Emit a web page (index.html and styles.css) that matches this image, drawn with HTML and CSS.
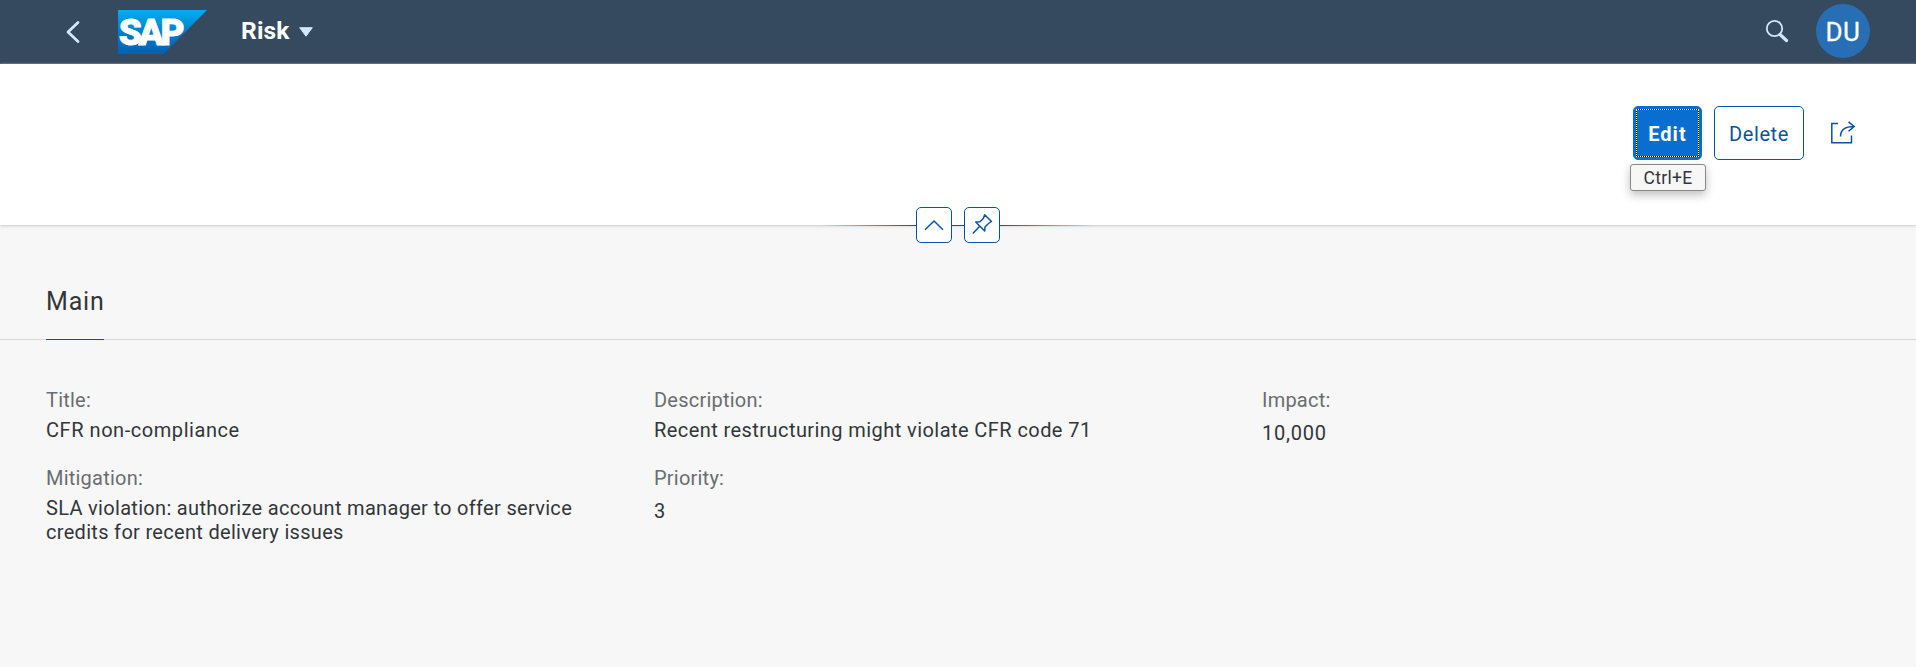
FILE: index.html
```html
<!DOCTYPE html>
<html lang="en">
<head>
<meta charset="utf-8">
<title>Risk</title>
<link rel="stylesheet" href="styles.css">
</head>
<body>
<header class="shell">
  <svg class="back" width="16" height="24" viewBox="0 0 16 24"><path d="M13 2.500 3 12l10 9.500" fill="none" stroke="#d1e8ff" stroke-width="2.800" stroke-linecap="round" stroke-linejoin="round"/></svg>
  <svg class="logo" width="89" height="44" viewBox="0 0 89 44">
    <defs><linearGradient id="logo-fill" x1="0" y1="0" x2="0" y2="1"><stop offset="0" stop-color="#00aeef"/><stop offset=".25" stop-color="#0097dc"/><stop offset=".6" stop-color="#0076c8"/><stop offset="1" stop-color="#0062b4"/></linearGradient></defs>
    <path d="M0 0H89L45.500 44H0Z" fill="url(#logo-fill)"/>
    <text x=".8" y="34.500" class="logo-text">S<tspan dx="-3.500">A</tspan><tspan dx="-3.300">P</tspan></text>
  </svg>
  <h1 class="app-title">Risk</h1>
  <svg class="arrow" width="14" height="10" viewBox="0 0 14 10"><path d="M.7 .7H13.300L7 9.200Z" fill="#d1e8ff" stroke="#d1e8ff" stroke-linejoin="round"/></svg>
  <svg class="search" width="24" height="24" viewBox="0 0 24 24" fill="none" stroke="#d1e8ff"><circle cx="9.500" cy="9.500" r="7.700" stroke-width="1.800"/><path d="m15 15.500 6.500 6" stroke-width="3.200" stroke-linecap="round"/></svg>
  <div class="avatar">DU</div>
</header>
<section class="page-header">
  <div class="actions">
    <div class="edit-wrap">
      <button class="btn btn-edit"><span class="focus"><span class="edit-text">Edit</span></span></button>
      <div class="tooltip">Ctrl+E</div>
    </div>
    <button class="btn btn-delete">Delete</button>
    <svg class="share" width="26" height="24" viewBox="0 0 26 24" fill="none" stroke="#0854a0" stroke-width="1.500"><path d="M8 2.500H1.800V21.800H21.500V14.500"/><path d="M10.500 15.500C10.500 9 15 5.500 24 5.500M18.500 .8 24.200 5.500 18.500 10.300"/></svg>
  </div>
  <div class="header-toggle">
    <i class="line line-left"></i>
    <span class="toggle"><svg width="34" height="34" viewBox="0 0 34 34" fill="none" stroke="#0854a0" stroke-width="1.500"><path d="m8 21.700 9-8.700 9 8.700"/></svg></span>
    <i class="line line-mid"></i>
    <span class="toggle"><svg width="34" height="34" viewBox="0 0 34 34" fill="none" stroke="#0854a0" stroke-width="1.500" stroke-linejoin="round"><path d="M19.700 6.700 26.500 13.500 23.500 15.500 20 19 19.700 23 10.700 14 15 13.800 18.300 10.500ZM14.500 18.500 7.800 25.500"/></svg></span>
    <i class="line line-right"></i>
  </div>
</section>
<nav class="tabs"><a class="tab">Main</a></nav>
<main class="form">
  <div class="col">
    <div class="field"><div class="label">Title:</div><div class="value title">CFR non-compliance</div></div>
    <div class="field"><div class="label">Mitigation:</div><div class="value multiline">SLA violation: authorize account manager to offer service<br>credits for recent delivery issues</div></div>
  </div>
  <div class="col">
    <div class="field"><div class="label">Description:</div><div class="value">Recent restructuring might violate CFR code 71</div></div>
    <div class="field"><div class="label">Priority:</div><div class="value number">3</div></div>
  </div>
  <div class="col">
    <div class="field"><div class="label">Impact:</div><div class="value number">10,000</div></div>
  </div>
</main>
</body>
</html>
```
FILE: styles.css
```css
* { box-sizing: border-box; }
body {
  margin: 0;
  height: 667px;
  overflow: hidden;
  background: #f7f7f7;
  color: #32363a;
  font: 20px/24px Roboto, "Noto Sans", sans-serif;
}
.shell {
  display: flex;
  align-items: center;
  height: 64px;
  padding: 0 46px 2px 65px;
  background: #354a5f;
}
.back { margin-top: 1px; margin-right: 37px; }
.logo { margin-top: 2px; margin-right: 34px; }
.logo-text { font: 900 37px Roboto, sans-serif; fill: #fff; stroke: #fff; stroke-width: .8px; }
.app-title { margin: 0; width: 50px; font-size: 24.5px; font-weight: 700; line-height: 30px; letter-spacing: .2px; color: #fff; }
.arrow { margin: 2px 0 0 7.5px; }
.search { margin-left: auto; margin-right: 27px; }
.avatar {
  width: 54px;
  height: 54px;
  border-radius: 50%;
  background: #286eb4;
  color: #fff;
  font-size: 26px;
  line-height: 56px;
  letter-spacing: .6px;
  text-align: center;
  -webkit-text-stroke: .3px #fff;
}
.page-header {
  position: relative;
  height: 161px;
  padding: 42px 61px 0;
  background: #fff;
  box-shadow: 0 0 2px #bbb, 0 2px 3px rgba(0, 0, 0, .08);
}
.actions { display: flex; justify-content: flex-end; align-items: flex-start; }
.edit-wrap { position: relative; margin-right: 12px; }
.btn {
  display: block;
  height: 54px;
  padding: 2px 0 0;
  border: 1px solid #0854a0;
  border-radius: 5px;
  background: #fff;
  color: #0854a0;
  font: 20px/24px Roboto, "Noto Sans", sans-serif;
  letter-spacing: .6px;
}
.btn-edit { width: 69px; padding: 2px; border-color: #0a6ed1; background: #0a6ed1; color: #fff; font-weight: 700; letter-spacing: 1px; }
.edit-text { padding-top: 2px; }
.focus { display: flex; align-items: center; justify-content: center; height: 48px; border: 1px dotted #fff; background: linear-gradient(#0a6ed1, #0a6ed1) padding-box, #000 border-box; }
.btn-delete { width: 90px; }
.share { margin: 15px -1px 0 26px; }
.tooltip {
  position: absolute;
  top: 58px;
  left: -3px;
  width: 76px;
  height: 27px;
  border: 1px solid #888;
  border-radius: 3px;
  background: #f7f7f7;
  box-shadow: 0 4px 10px rgba(0, 0, 0, .25);
  font-size: 17.5px;
  line-height: 26px;
  letter-spacing: .3px;
  text-align: center;
}
.header-toggle {
  position: absolute;
  top: 143px;
  left: 0;
  right: 0;
  display: flex;
  justify-content: center;
  align-items: center;
}
.line { height: 1px; background: #0854a0; }
.line-mid { width: 12px; }
.line-left { width: 96px; background: linear-gradient(to left, #0854a0, transparent); }
.line-right { width: 96px; background: linear-gradient(to right, #0854a0, transparent); }
.toggle { display: flex; width: 36px; height: 36px; border: 1px solid #0854a0; border-radius: 5px; background: #fff; }
.tabs { display: flex; height: 115px; padding: 0 46px; border-bottom: 1px solid #d9d9d9; }
.tab { width: 58px; height: 115px; padding-top: 62px; border-bottom: 1px solid #0854a0; font-size: 25px; line-height: 30px; letter-spacing: .8px; }
.form { display: grid; grid-template-columns: 608px 608px 1fr; padding: 48px 0 0 46px; }
.field { min-height: 78px; }
.label { margin-bottom: 6px; color: #6a6d70; letter-spacing: .22px; }
.value { letter-spacing: .43px; }
.title { letter-spacing: .55px; }
.multiline { letter-spacing: .31px; }
.number { padding-top: 3px; letter-spacing: .75px; }
```
